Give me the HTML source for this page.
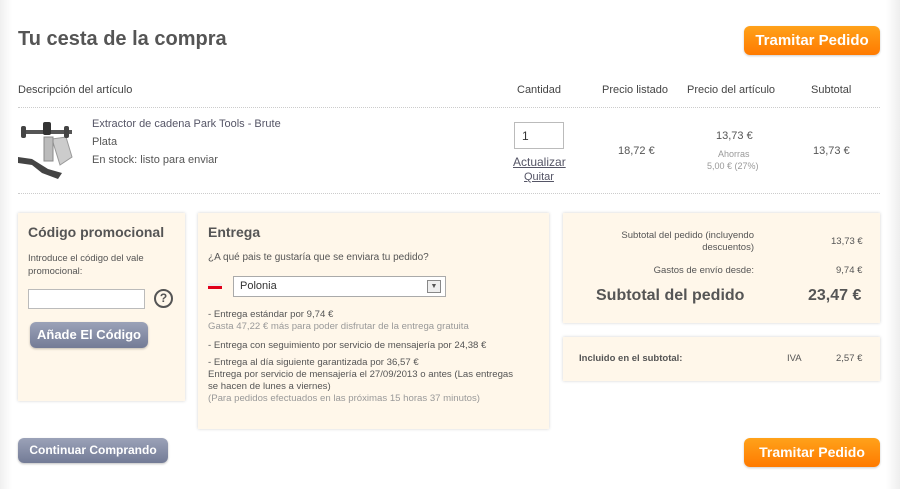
<!DOCTYPE html>
<html><head><meta charset="utf-8"><style>
*{margin:0;padding:0;box-sizing:border-box}
body{width:900px;height:489px;overflow:hidden;font-family:"Liberation Sans",Arial,sans-serif;color:#555;font-size:11px;position:relative;background:linear-gradient(to right,#f0f0f0 0,#fff 12px,#fff 886px,#eee 900px)}
.a{position:absolute;white-space:nowrap}
.btn{position:absolute;background:linear-gradient(#ffa21a,#ff7a00);color:#fff;font-weight:bold;font-size:15px;border-radius:6px;text-align:center;box-shadow:0 1px 2px rgba(0,0,0,.2)}
.gbtn{position:absolute;background:linear-gradient(#9ba2b8,#737b96);color:#fff;font-weight:bold;font-size:13px;border-radius:6px;text-align:center;box-shadow:0 1px 2px rgba(0,0,0,.25)}
.box{position:absolute;background:#fff7ea;box-shadow:0 0 3px rgba(0,0,0,.18)}
.dot{position:absolute;left:18px;width:862px;border-top:1px dotted #ccc}
</style></head><body>
<div class="a" style="left:18px;top:28px;font-size:20px;font-weight:bold;color:#555">Tu cesta de la compra</div>
<div class="btn" style="left:744px;top:26px;width:136px;height:29px;line-height:29px">Tramitar Pedido</div>

<div class="a" style="left:18px;top:84px;color:#444">Descripción del artículo</div>
<div class="a" style="left:517px;top:84px;color:#444">Cantidad</div>
<div class="a" style="left:602px;top:84px;color:#444">Precio listado</div>
<div class="a" style="left:687px;top:84px;color:#444">Precio del artículo</div>
<div class="a" style="left:811px;top:84px;color:#444">Subtotal</div>
<div class="dot" style="top:107px"></div>

<svg class="a" style="left:18px;top:117px" width="62" height="64" viewBox="0 0 62 64">
<rect width="62" height="64" fill="#fff"/>
<path d="M34 22l14-2 6 20-12 8z" fill="#ccc" stroke="#999"/>
<rect x="26" y="20" width="9" height="24" fill="#bbb" stroke="#888"/>
<rect x="4" y="13" width="50" height="4" fill="#555"/>
<rect x="3" y="9" width="5" height="12" rx="2" fill="#444"/>
<rect x="46" y="9" width="5" height="12" rx="2" fill="#444"/>
<rect x="25" y="5" width="8" height="13" rx="2" fill="#333"/>
<path d="M0 40l14 2 16 10 14 4-4 6-16-6-10-8-14-2z" fill="#444"/>
</svg>
<div class="a" style="left:92px;top:118px;color:#556;font-size:11px">Extractor de cadena Park Tools - Brute</div>
<div class="a" style="left:92px;top:136px">Plata</div>
<div class="a" style="left:92px;top:154px">En stock: listo para enviar</div>

<div class="a" style="left:514px;top:122px;width:50px;height:27px;border:1px solid #bbb;background:#fff;font-size:12px;padding:6px 0 0 7px;color:#333">1</div>
<div class="a" style="left:513px;top:155px;font-size:12px;color:#556;text-decoration:underline">Actualizar</div>
<div class="a" style="left:524px;top:171px;font-size:11px;color:#556;text-decoration:underline">Quitar</div>
<div class="a" style="left:618px;top:145px">18,72 €</div>
<div class="a" style="left:716px;top:130px">13,73 €</div>
<div class="a" style="left:718px;top:149px;font-size:9px;color:#999">Ahorras</div>
<div class="a" style="left:707px;top:161px;font-size:9px;color:#999">5,00 € (27%)</div>
<div class="a" style="left:813px;top:145px">13,73 €</div>
<div class="dot" style="top:193px"></div>

<div class="box" style="left:18px;top:213px;width:167px;height:188px"></div>
<div class="a" style="left:28px;top:224px;font-size:14px;font-weight:bold">Código promocional</div>
<div class="a" style="left:28px;top:252px;font-size:9.5px;line-height:13px">Introduce el código del vale<br>promocional:</div>
<div class="a" style="left:28px;top:289px;width:117px;height:20px;background:#fff;border:1px solid #bbb"></div>
<div class="a" style="left:154px;top:289px;width:19px;height:19px;border:2px solid #555;border-radius:50%;font-size:12px;font-weight:bold;text-align:center;line-height:15px">?</div>
<div class="gbtn" style="left:30px;top:322px;width:118px;height:26px;line-height:26px">Añade El Código</div>

<div class="box" style="left:198px;top:213px;width:351px;height:216px"></div>
<div class="a" style="left:208px;top:224px;font-size:14px;font-weight:bold">Entrega</div>
<div class="a" style="left:208px;top:252px;font-size:10px">¿A qué pais te gustaría que se enviara tu pedido?</div>
<div class="a" style="left:208px;top:283px;width:14px;height:6px;background:linear-gradient(#eee 50%,#e0001a 50%)"></div>
<div class="a" style="left:233px;top:276px;width:213px;height:21px;background:#fff;border:1px solid #aaa;font-size:11px;color:#333;padding:3px 0 0 6px">Polonia</div>
<div class="a" style="left:427px;top:280px;width:14px;height:13px;border:1px solid #888;background:#eee;font-size:7px;text-align:center;line-height:12px">▼</div>
<div class="a" style="left:208px;top:309px;font-size:9.6px;line-height:12px">- Entrega estándar por 9,74 €<br><span style="color:#999">Gasta 47,22 € más para poder disfrutar de la entrega gratuita</span></div>
<div class="a" style="left:208px;top:340px;font-size:9.6px">- Entrega con seguimiento por servicio de mensajería por 24,38 €</div>
<div class="a" style="left:208px;top:357px;font-size:9.6px;line-height:12px">- Entrega al día siguiente garantizada por 36,57 €<br>Entrega por servicio de mensajería el 27/09/2013 o antes (Las entregas<br>se hacen de lunes a viernes)<br><span style="color:#999">(Para pedidos efectuados en las próximas 15 horas 37 minutos)</span></div>

<div class="box" style="left:563px;top:213px;width:317px;height:110px"></div>
<div class="a" style="left:580px;top:230px;width:174px;text-align:right;font-size:9.5px;line-height:12px">Subtotal del pedido (incluyendo<br>descuentos)</div>
<div class="a" style="left:831px;top:236px;font-size:9.5px">13,73 €</div>
<div class="a" style="left:580px;top:265px;width:174px;text-align:right;font-size:9.5px">Gastos de envío desde:</div>
<div class="a" style="left:836px;top:265px;font-size:9.5px">9,74 €</div>
<div class="a" style="left:596px;top:287px;font-size:16px;font-weight:bold">Subtotal del pedido</div>
<div class="a" style="left:808px;top:287px;font-size:16px;font-weight:bold">23,47 €</div>

<div class="box" style="left:563px;top:337px;width:317px;height:44px"></div>
<div class="a" style="left:579px;top:353px;font-size:9.5px;font-weight:bold">Incluido en el subtotal:</div>
<div class="a" style="left:787px;top:353px;font-size:9.5px">IVA</div>
<div class="a" style="left:836px;top:353px;font-size:9.5px">2,57 €</div>

<div class="gbtn" style="left:18px;top:438px;width:150px;height:25px;line-height:25px;font-size:12px">Continuar Comprando</div>
<div class="btn" style="left:744px;top:438px;width:136px;height:29px;line-height:29px;font-size:14px">Tramitar Pedido</div>
</body></html>
